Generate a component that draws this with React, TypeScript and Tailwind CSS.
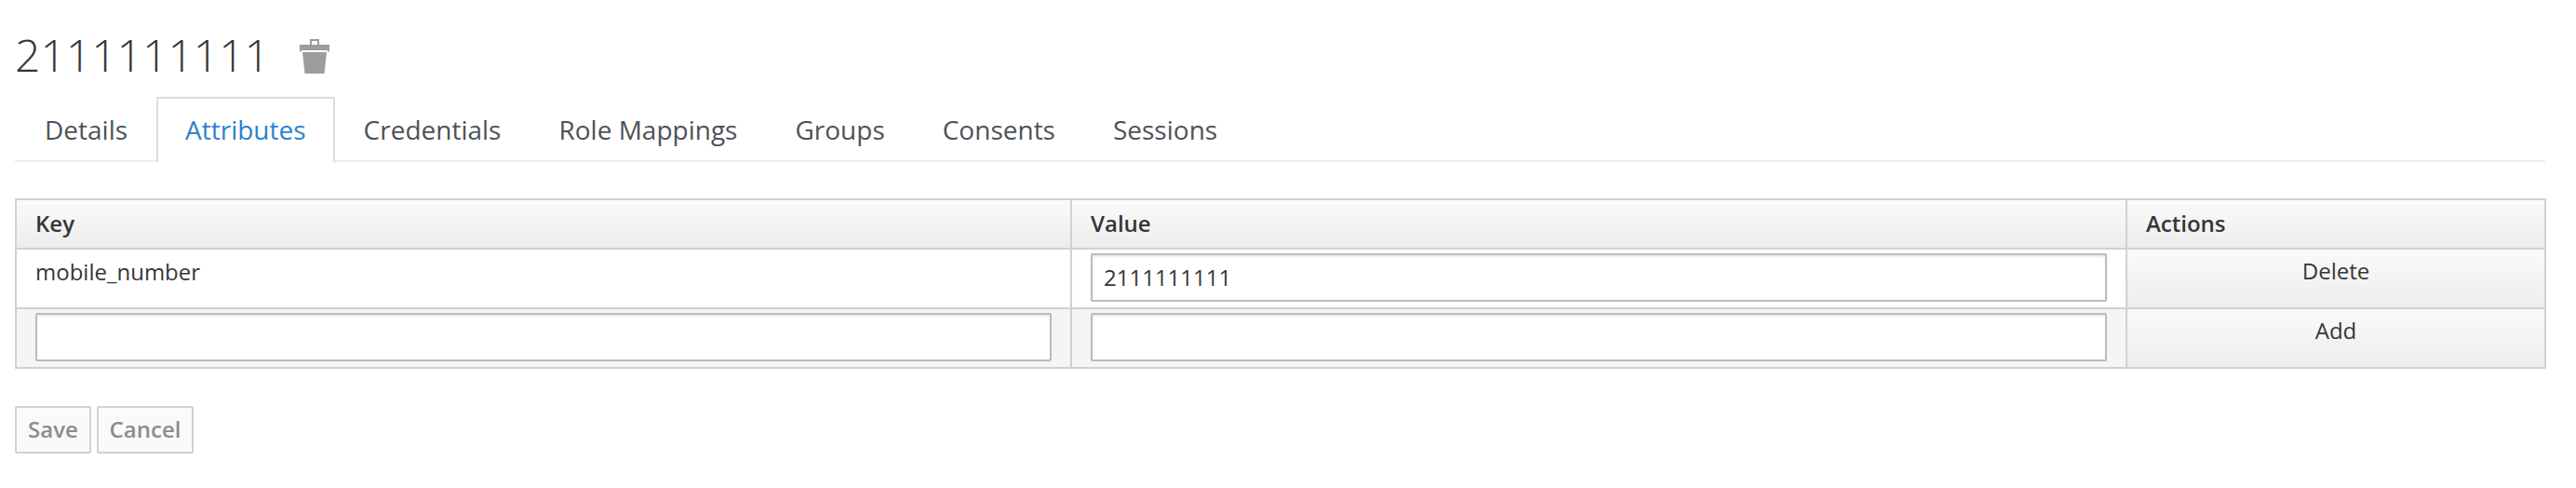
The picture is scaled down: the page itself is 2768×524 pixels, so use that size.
const tabs = ["Details", "Attributes", "Credentials", "Role Mappings", "Groups", "Consents", "Sessions"];

function Trash() {
  return (
    <svg width="32" height="37" viewBox="0 0 32 37" className="ml-[32px] mt-[2px] shrink-0">
      <rect x="12" y="1" width="8" height="6" fill="none" stroke="#9c9c9c" strokeWidth="2" />
      <path d="M0 6H32V14L29 12H3L0 14Z" fill="#9c9c9c" />
      <path d="M3 14H29L26.5 37H5.5Z" fill="#9c9c9c" />
    </svg>
  );
}

const th = "h-[53px] border-2 border-[#d1d1d1] bg-gradient-to-b from-[#fafafa] to-[#ededed] px-[20px] pb-[2px] text-left align-middle text-[24px] font-semibold leading-[40px] text-[#363636]";
const td = "border-2 border-[#d1d1d1] px-[20px] pb-[2px] align-middle";
const input = "block h-[52px] w-full border-2 border-[#bbbbbb] bg-white px-[12px] pb-[2px] text-[24px] text-[#363636] shadow-[inset_0_2px_2px_rgba(3,3,3,0.08)] rounded-[2px] outline-none";

function ActionCell({ label }: { label: string }) {
  return (
    <td className="border-2 border-[#d1d1d1] bg-gradient-to-b from-[#fafafa] to-[#ededed] p-0 align-top">
      <div className="h-[62px] pt-[3px] text-center text-[24px] leading-[40px] text-[#363636]">{label}</div>
    </td>
  );
}

export default function App() {
  return (
    <div className="h-[524px] w-[2768px] overflow-hidden bg-white pl-[16px] pr-[33px] font-['Open_Sans',sans-serif] text-[#363636]">
      <div className="flex h-[104px] items-start pt-[26px]">
        <h1 className="text-[48px] font-light leading-[66px] text-[#363636]">2111111111</h1>
        <div className="pt-[14px]"><Trash /></div>
      </div>
      <div className="flex h-[70px] border-b-2 border-[#ededed] pl-[1px]">
        {tabs.map((t) => (
          <div
            key={t}
            className={
              t === "Attributes"
                ? "-mb-[2px] h-[70px] border-2 border-b-0 border-[#dddddd] bg-white px-[29px] text-[28px] leading-[66px] text-[#2b82cb]"
                : "h-[68px] border-2 border-transparent px-[29px] text-[28px] leading-[66px] text-[#4d5258]"
            }
          >
            {t}
          </div>
        ))}
      </div>
      <table className="mt-[39px] w-[2718px] table-fixed border-collapse">
        <colgroup>
          <col className="w-[1134px]" />
          <col className="w-[1134px]" />
          <col className="w-[450px]" />
        </colgroup>
        <thead>
          <tr>
            <th className={th}>Key</th>
            <th className={th}>Value</th>
            <th className={th}>Actions</th>
          </tr>
        </thead>
        <tbody>
          <tr className="h-[64px]">
            <td className={`${td} align-top pt-[4px] text-[24px] leading-[40px] text-[#363636]`}>mobile_number</td>
            <td className={td}><input className={input} readOnly value="2111111111" /></td>
            <ActionCell label="Delete" />
          </tr>
          <tr className="h-[64px] bg-[#f5f5f5]">
            <td className={td}><input className={input} readOnly /></td>
            <td className={td}><input className={input} readOnly /></td>
            <ActionCell label="Add" />
          </tr>
        </tbody>
      </table>
      <div className="mt-[40px] flex gap-[6px]">
        <button className="h-[51px] w-[82px] rounded-[2px] border-2 border-[#d1d1d1] bg-[#fafafa] pb-[2px] text-[24px] font-semibold text-[#8b8d8f]">Save</button>
        <button className="h-[51px] w-[104px] rounded-[2px] border-2 border-[#d1d1d1] bg-[#fafafa] pb-[2px] text-[24px] font-semibold text-[#8b8d8f]">Cancel</button>
      </div>
    </div>
  );
}
